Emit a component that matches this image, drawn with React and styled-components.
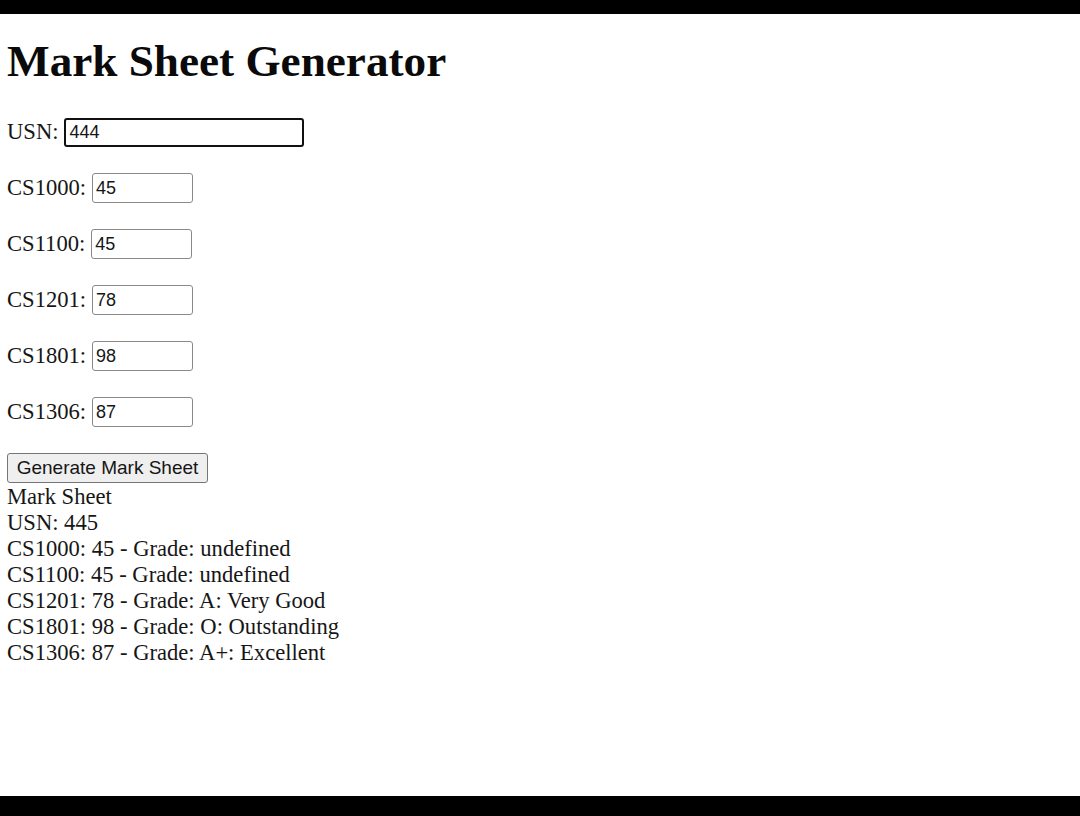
import React from "react";
import styled, { createGlobalStyle } from "styled-components";

const Global = createGlobalStyle`
  html, body { margin: 0; padding: 0; background: #000; }
  body { font-family: "Liberation Serif", "Times New Roman", serif; }
`;

const Frame = styled.div`
  display: flex;
  flex-direction: column;
  width: 1080px;
  height: 816px;
  background: #000;
`;

const Bar = styled.div`
  height: ${(p) => p.$h}px;
  background: #000;
  flex: none;
`;

const Page = styled.main`
  flex: 1;
  background: #fff;
  color: #161616;
  padding: 22px 0 0 7px;
  font-size: 22.6px;
`;

const Title = styled.h1`
  margin: 0 0 31px 0;
  font-size: 45.2px;
  line-height: 50px;
  font-weight: bold;
  color: #0a0a0a;
`;

const Form = styled.div`
  display: flex;
  flex-direction: column;
  align-items: flex-start;
  gap: 26px;
`;

const Row = styled.label`
  display: flex;
  align-items: center;
  height: 30px;
  gap: 6px;
  line-height: 26px;
`;

const Input = styled.input`
  box-sizing: border-box;
  width: ${(p) => p.$w}px;
  height: ${(p) => (p.$focus ? 29 : 30)}px;
  margin: 0;
  padding: 1px 3px;
  font-family: "Liberation Sans", Arial, sans-serif;
  font-size: 18px;
  color: #161616;
  background: #fff;
  border: ${(p) => (p.$focus ? "2px solid #111" : "1px solid #8a8a8a")};
  border-radius: 3px;
  outline: none;
`;

const Button = styled.button`
  box-sizing: border-box;
  height: 30px;
  width: 201px;
  margin: 0;
  padding: 0 6px;
  font-family: "Liberation Sans", Arial, sans-serif;
  font-size: 19px;
  color: #161616;
  background: #efefef;
  border: 1px solid #767676;
  border-radius: 3px;
`;

const Output = styled.div`
  line-height: 26px;
  margin-top: 1px;
`;

const Line = styled.div``;

const subjects = [
  { code: "CS1000", mark: "45", grade: "undefined" },
  { code: "CS1100", mark: "45", grade: "undefined" },
  { code: "CS1201", mark: "78", grade: "A: Very Good" },
  { code: "CS1801", mark: "98", grade: "O: Outstanding" },
  { code: "CS1306", mark: "87", grade: "A+: Excellent" },
];

export default function App() {
  return (
    <>
      <Global />
      <Frame>
        <Bar $h={14} />
        <Page>
          <Title>Mark Sheet Generator</Title>
          <Form>
            <Row>
              USN:
              <Input $w={240} $focus defaultValue="444" />
            </Row>
            {subjects.map((s) => (
              <Row key={s.code}>
                {s.code}:
                <Input $w={101} defaultValue={s.mark} />
              </Row>
            ))}
            <Button>Generate Mark Sheet</Button>
          </Form>
          <Output>
            <Line>Mark Sheet</Line>
            <Line>USN: 445</Line>
            {subjects.map((s) => (
              <Line key={s.code}>
                {s.code}: {s.mark} - Grade: {s.grade}
              </Line>
            ))}
          </Output>
        </Page>
        <Bar $h={20} />
      </Frame>
    </>
  );
}
